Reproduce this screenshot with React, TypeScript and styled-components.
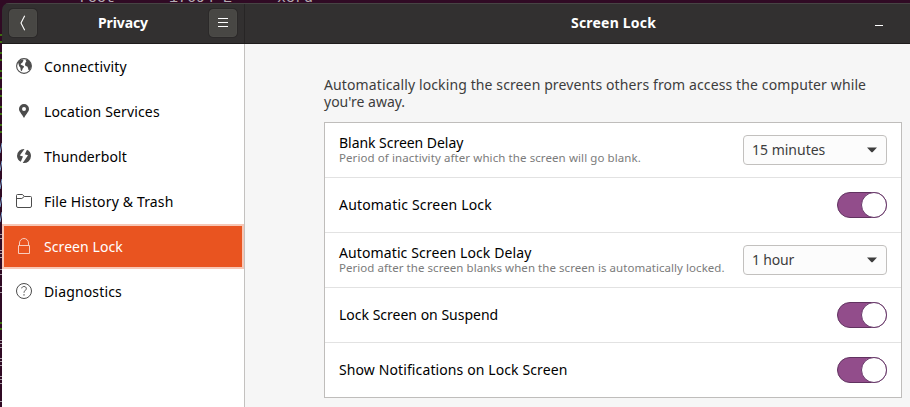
import React from 'react';
import styled, { createGlobalStyle } from 'styled-components';

const Global = createGlobalStyle`
  *, *::after { box-sizing: border-box; }
  html, body { margin: 0; overflow: hidden; background: #300a24; }
  body { font-family: "Noto Sans", "Open Sans", sans-serif; font-size: 14px; color: #000; }
  button { font: inherit; padding: 0; margin: 0; }
`;

const Desktop = styled.div`
  position: relative;
  width: 910px;
  height: 407px;
  padding: 3px 0 0 2px;
  overflow: hidden;
  background: #300a24;
`;

/* Terminal window that shows behind the settings window */
const TerminalLine = styled.div`
  position: absolute;
  left: 79px;
  top: -7px;
  font: 15px/12px "Liberation Mono", monospace;
  color: #b5adb3;
  white-space: pre;
`;

const TerminalEdge = styled.svg`
  position: absolute;
  left: 0;
  top: 0;
`;

const Window = styled.div`
  position: relative;
  width: 908px;
  height: 404px;
  display: grid;
  grid-template: 41px 363px / 243px 665px;
  border-radius: 7px 0 0 0;
  overflow: hidden;
`;

const HeaderPart = styled.header<{ $side?: boolean }>`
  display: flex;
  align-items: center;
  justify-content: ${p => (p.$side ? 'space-between' : 'flex-start')};
  padding: ${p => (p.$side ? '0 8px 0 7px' : '0')};
  background: #323030;
  border-bottom: 1px solid #1e1c1c;
  box-shadow: inset 0 1px #474444${p => (p.$side ? ', inset -1px 0 #272525' : '')};
`;

const Title = styled.h1<{ $ls: number; $x?: number }>`
  margin: 0 0 1px ${p => p.$x ?? 0}px;
  font-size: 14px;
  font-weight: 700;
  line-height: 20px;
  letter-spacing: ${p => p.$ls}px;
  white-space: nowrap;
  color: #fff;
`;

const HeaderButton = styled.button`
  width: 28px;
  height: 28px;
  display: flex;
  align-items: center;
  justify-content: center;
  border: 1px solid #4b4a47;
  border-radius: 4px;
  background: #484744;
  box-shadow: 0 0 0 1px #2b2929;
`;

const Minimize = styled.span`
  width: 8px;
  height: 1px;
  margin: 4px 27px 0 auto;
  background: #fff;
`;

const Sidebar = styled.nav`
  background: #fff;
  border-right: 1px solid #c3c1bf;
`;

const NavItem = styled.a<{ $active?: boolean }>`
  height: 45px;
  display: flex;
  align-items: center;
  padding: 0 0 0 ${p => (p.$active ? 12 : 14)}px;
  border: ${p => (p.$active ? '2px solid #f7c7b6' : '0')};
  background: ${p => (p.$active ? '#e95420' : '#fff')};
  color: ${p => (p.$active ? '#fff' : '#000')};

  svg {
    flex: none;
    width: 16px;
    height: 16px;
    margin: 0 12px 1px 0;
    color: ${p => (p.$active ? '#f8cdbe' : '#4c4c4c')};
  }
`;

const Text = styled.span<{ $ls: number }>`
  letter-spacing: ${p => p.$ls}px;
  line-height: 20px;
  white-space: nowrap;
`;

const Content = styled.main`
  padding: 32px 8px 0 79px;
  background: #f6f6f6;
`;

const Intro = styled.p`
  margin: 0 0 12px;
  display: flex;
  flex-direction: column;
  align-items: flex-start;
  color: #3d3d3d;

  ${Text} { line-height: 17px; }
`;

const List = styled.section`
  width: 578px;
  border: 1px solid #bfbdbb;
  background: #fff;
`;

const Row = styled.div`
  height: 54px;
  display: flex;
  align-items: center;
  justify-content: space-between;
  padding: 0 14px;

  & + & {
    height: 55px;
    border-top: 1px solid #e2e2e2;
  }
`;

const Labels = styled.div`
  display: flex;
  flex-direction: column;
  align-items: flex-start;

  ${Text} { line-height: 16px; }
`;

const Hint = styled.span<{ $ls: number }>`
  font-size: 11.5px;
  line-height: 14px;
  letter-spacing: ${p => p.$ls}px;
  color: #7b7b7b;
  white-space: nowrap;
`;

const Select = styled.button`
  width: 144px;
  height: 30px;
  display: flex;
  align-items: center;
  justify-content: space-between;
  padding: 0 9px 0 8px;
  border: 1px solid #c2c0be;
  border-radius: 4px;
  background: #fcfcfc;
  color: #3d3d3d;
`;

const Switch = styled.button`
  width: 50px;
  height: 26px;
  display: flex;
  justify-content: flex-end;
  border: 1px solid #613260;
  border-radius: 13px;
  background: #924d8b;

  &::after {
    content: '';
    flex: none;
    width: 26px;
    height: 26px;
    margin: -1px;
    border: 1px solid #68386a;
    border-radius: 50%;
    background: #fff;
  }
`;

const Globe = () => (
  <svg viewBox="0 0 16 16">
    <circle cx="8" cy="8" r="7.4" fill="none" stroke="currentColor" strokeWidth="1.1" />
    <path fill="currentColor" d="M2 4.200 4.200 2.300 7 1.400 7.500 2.600 6.800 3.800 6.100 5 5 5.600 4.600 6.600 6 7.200 8 8.200 7.700 9.500 6.700 10.600 5.800 13.200 4.700 12.200 4.400 9.800 3.200 8.300 2.700 6.500ZM9.300 5 10.400 3.200 9.600 2.300 11 1.600 14 3.800 15.200 7 14.800 10 13.700 12 12.500 12.100 12 10 11.300 8.600 9.500 8 9 6.400Z" />
  </svg>
);
const Pin = () => (
  <svg viewBox="0 0 16 16">
    <path fill="currentColor" fillRule="evenodd" d="M8 1a5 5 0 0 0-5 5c0 2.700 2.600 4.500 5 9 2.400-4.500 5-6.300 5-9a5 5 0 0 0-5-5Zm0 3a2 2 0 1 1 0 4 2 2 0 0 1 0-4Z" />
  </svg>
);
const Bolt = () => (
  <svg viewBox="0 0 16 16">
    <path fill="currentColor" d="M8.500 1 3.800 7.500 7 8.500 4.800 13.800A7 7 0 0 1 1 8a7 7 0 0 1 7.500-7ZM11 1.700A7 7 0 0 1 15 8a7 7 0 0 1-8.300 6.900L12 7.300 8.800 6.200Z" />
  </svg>
);
const Folder = () => (
  <svg viewBox="0 0 16 16" fill="none" stroke="currentColor">
    <path d="M.5 13V2.500a1 1 0 0 1 1-1h5l1.800 2h6.200a1 1 0 0 1 1 1V13a1.500 1.500 0 0 1-1.500 1.500H2A1.500 1.500 0 0 1 .5 13ZM.5 5.500h5.300l2.500-2" />
  </svg>
);
const Lock = () => (
  <svg viewBox="0 0 16 16" fill="none" stroke="currentColor">
    <path d="M2.500 7.500h11v8h-11ZM3.500 7.500V5a4.500 4.500 0 0 1 9 0v2.500" />
  </svg>
);
const Question = () => (
  <svg viewBox="0 0 16 16" fill="none" stroke="currentColor">
    <circle cx="8" cy="8" r="7.500" />
    <path d="M5.700 5.300C6 3.900 7 3.500 8 3.500c1.300 0 2.300.8 2.300 2 0 2-2.300 2-2.300 4.200" />
    <path strokeWidth="1.200" d="M8 11.200v1.300" />
  </svg>
);
const Caret = () => (
  <svg width="10" height="6" viewBox="0 0 10 6">
    <path d="M0 .5h10L6 4.700q-1 1-2 0Z" fill="#3d3d3d" />
  </svg>
);

const greenMarks = [34, 41, 52, 59, 70, 77, 88, 95, 106, 113, 124, 131, 322, 328];
const greyMarks = [234, 238, 250, 253, 257, 269, 274, 286, 292, 340, 343, 347, 358, 361, 365, 376, 379, 383, 401];
const slashes = [143, 161, 179, 197, 212];

const nav = [
  { label: 'Connectivity', icon: Globe, ls: 0.17 },
  { label: 'Location Services', icon: Pin, ls: 0.15 },
  { label: 'Thunderbolt', icon: Bolt, ls: 0.1 },
  { label: 'File History & Trash', icon: Folder, ls: 0.15 },
  { label: 'Screen Lock', icon: Lock, ls: 0.08, active: true },
  { label: 'Diagnostics', icon: Question, ls: 0.15 },
];

const rows = [
  {
    label: 'Blank Screen Delay', ls: -0.04,
    hint: 'Period of inactivity after which the screen will go blank.', hintLs: 0.09,
    value: '15 minutes', valueLs: 0,
  },
  { label: 'Automatic Screen Lock', ls: 0.18 },
  {
    label: 'Automatic Screen Lock Delay', ls: 0.11,
    hint: 'Period after the screen blanks when the screen is automatically locked.', hintLs: 0.05,
    value: '1 hour', valueLs: -0.2,
  },
  { label: 'Lock Screen on Suspend', ls: 0 },
  { label: 'Show Notifications on Lock Screen', ls: 0.11 },
];

export default function App() {
  return (
    <>
      <Global />
      <Desktop>
        <TerminalLine>{'root      17694 E     xord'}</TerminalLine>
        <TerminalEdge width="2" height="407" aria-hidden>
          {greenMarks.map(y => <rect key={y} y={y} width="2" height="2" fill="#3c7010" />)}
          {greyMarks.map(y => <rect key={y} y={y} width="2" height="1" fill="#a195a0" />)}
          {slashes.map(y => <path key={y} d={`M2 ${y}L0 ${y + 10}`} stroke="#7fa5cf" />)}
        </TerminalEdge>
        <Window>
          <HeaderPart $side>
            <HeaderButton aria-label="Back">
              <svg width="8" height="16" viewBox="0 0 8 16">
                <path d="M5.700.8 2 8l3.700 7.200" fill="none" stroke="#fff" strokeWidth="1.100" />
              </svg>
            </HeaderButton>
            <Title $ls={-0.1}>Privacy</Title>
            <HeaderButton aria-label="Menu">
              <svg width="10" height="10" viewBox="0 0 10 10">
                <path d="M0 .5h10M0 4.500h10M0 8.500h10" stroke="#fff" />
              </svg>
            </HeaderButton>
          </HeaderPart>
          <HeaderPart>
            <Title $ls={0.2} $x={326}>Screen Lock</Title>
            <Minimize />
          </HeaderPart>
          <Sidebar>
            {nav.map(({ label, icon: Icon, ls, active }) => (
              <NavItem key={label} $active={active}>
                <Icon />
                <Text $ls={ls}>{label}</Text>
              </NavItem>
            ))}
          </Sidebar>
          <Content>
            <Intro>
              <Text $ls={0.115}>Automatically locking the screen prevents others from access the computer while</Text>
              <Text $ls={0}>you're away.</Text>
            </Intro>
            <List>
              {rows.map(row => (
                <Row key={row.label}>
                  <Labels>
                    <Text $ls={row.ls}>{row.label}</Text>
                    {row.hint && <Hint $ls={row.hintLs ?? 0}>{row.hint}</Hint>}
                  </Labels>
                  {row.value ? (
                    <Select>
                      <Text $ls={row.valueLs ?? 0}>{row.value}</Text>
                      <Caret />
                    </Select>
                  ) : (
                    <Switch aria-label={row.label} />
                  )}
                </Row>
              ))}
            </List>
          </Content>
        </Window>
      </Desktop>
    </>
  );
}
